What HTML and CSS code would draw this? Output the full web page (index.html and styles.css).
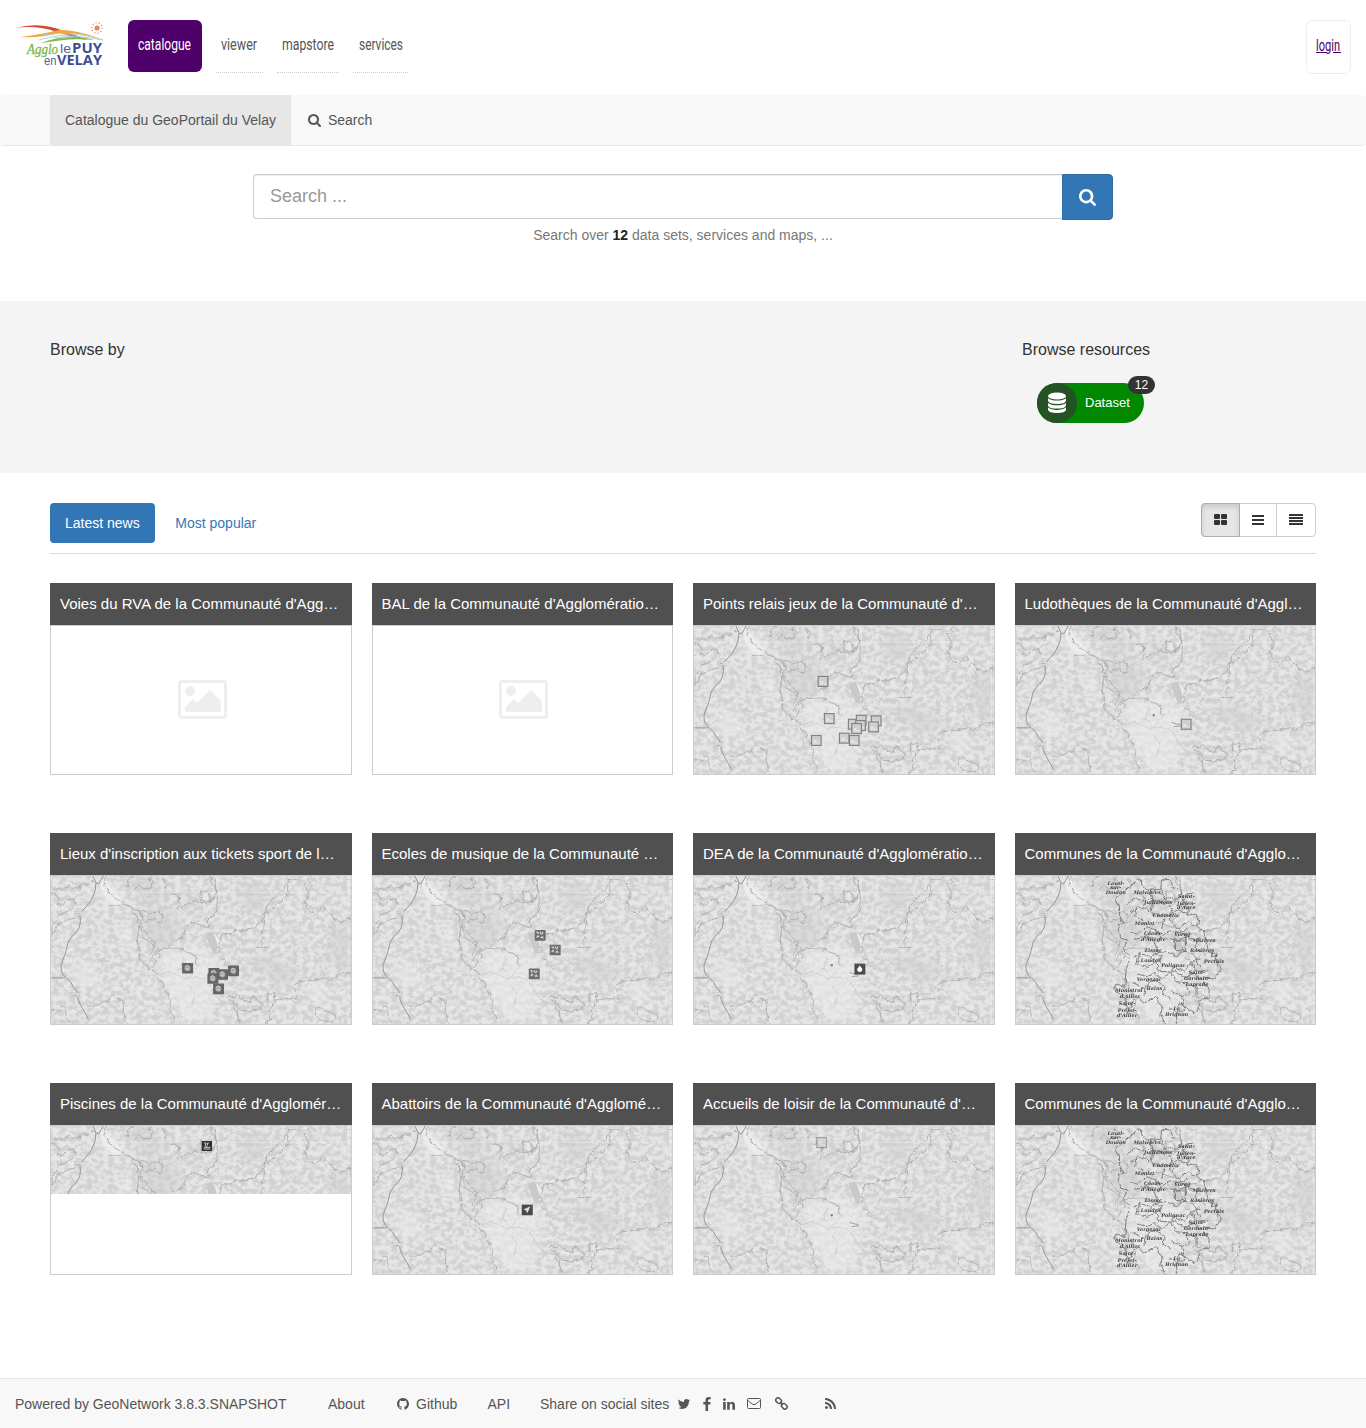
FILE: index.html
```html
<!DOCTYPE html>
<html lang="en">
<head>
<meta charset="utf-8">
<title>Catalogue du GeoPortail du Velay</title>
<link rel="stylesheet" href="styles.css">
</head>
<body>
<svg class="defs" width="0" height="0" aria-hidden="true">
  <defs>
    <filter id="relief" x="0" y="0" width="100%" height="100%" color-interpolation-filters="sRGB">
      <feTurbulence type="fractalNoise" baseFrequency="0.06 0.07" numOctaves="3" seed="11"/>
      <feColorMatrix values="2 0 0 0 -.46  2 0 0 0 -.46  2 0 0 0 -.46  0 0 0 0 1"/>
      <feComponentTransfer>
        <feFuncR type="table" tableValues=".82 .82 .83 .84 .88 .89 .9 .91"/>
        <feFuncG type="table" tableValues=".82 .82 .83 .84 .88 .89 .9 .91"/>
        <feFuncB type="table" tableValues=".82 .82 .83 .84 .88 .89 .9 .91"/>
      </feComponentTransfer>
    </filter>
    <filter id="wiggle" x="-2%" y="-2%" width="104%" height="104%" color-interpolation-filters="sRGB">
      <feTurbulence type="fractalNoise" baseFrequency="0.07" numOctaves="2" seed="4" result="n"/>
      <feDisplacementMap in="SourceGraphic" in2="n" scale="16" xChannelSelector="R" yChannelSelector="G"/>
    </filter>
    <filter id="soft" x="-30%" y="-30%" width="160%" height="160%"><feGaussianBlur stdDeviation="14"/></filter>
    <symbol id="search" viewBox="0 0 1664 1664"><path d="M1152 704q0-185-131.500-316.500t-316.500-131.500-316.500 131.500-131.500 316.500 131.500 316.500 316.500 131.500 316.500-131.500 131.500-316.500zm512 832q0 52-38 90t-90 38q-54 0-90-38l-343-342q-179 124-399 124-143 0-273.500-55.500t-225-150-150-225-55.500-273.500 55.500-273.500 150-225 225-150 273.500-55.500 273.500 55.500 225 150 150 225 55.500 273.500q0 220-124 399l343 343q37 37 37 90z"/></symbol>
    <symbol id="picture" viewBox="0 0 49 39"><rect x="1.500" y="1.500" width="46" height="36" rx="2.500" fill="none" stroke="currentColor" stroke-width="3"/><circle cx="12" cy="11" r="5"/><path d="M7 32v-5l8-8 4 4 13-13 11 11v11z"/></symbol>
    <g id="terrain">
      <rect x="27" y="153" width="900" height="446" filter="url(#relief)"/>
      <g filter="url(#soft)">
        <path fill="#cdcdcd" opacity=".5" d="M300 260h90l30 70-60 60-70-60zM230 153h90l60 60-60 40zM870 300h57v150l-60-40zM590 190l60-20 30 60-60 40zM600 400l80-10 100 50-60 40zM420 200l60 20-30 50z"/>
        <path fill="#ebebeb" opacity=".6" d="M160 160l40 10 60 70-50 10-40-40zM360 370l100-10 80 50-40 180h-80l-60-130zM220 300l60 20-20 60zM790 470l60 20 10 50-50-10z"/>
        <path fill="#ececec" opacity=".5" d="M90 400l70 20 20 80-80-30zM40 270l60-10-30 50z"/>
      </g>
      <path fill="#ececec" d="M174 160l14-4 16 30 24 22 14 28-24 4-26-20-16-30z"/>
      <path fill="#c9c9c9" d="M492 328l24-8 10 20 0 48-12-2-14-32z"/><path fill="#eee" d="M514 320l12 16 8 26-8-6z"/>
      <path stroke="#eee" stroke-width="2" d="M27 202h900M921 153v446" opacity=".7"/>
      <g filter="url(#wiggle)">
      <g fill="none" stroke="#a8a8a8" stroke-width="2.600" stroke-linejoin="round">
        <path d="M27 205l14 4 10 16-6 14 20 3 16-18 14-2 4 14-14 18-28 12-12 22-18 18v24l12-10 8-20 28-14 26-8M34 192h30l18-8 10 6 16-2 12-8 24-4 14-8M190 155l-4 24 10 18 22 20 36 22 26 14 20 18-4 30 12 20 30 32-2 20-14 20M250 190l14-12-8-12 20-12M276 192l20-10 8 10 26-4 4-16-12-8 10-10M370 196l4-16-12-20M388 208l22 2v40l18-8 16-10 16-4 20 6 30-8 14-20-4-24-14-10 8-27M478 195l2 32 30 4-4-24-28-8"/>
        <path d="M522 155l-2 30 7 28-3 50-27 24v18l-50-12-14 20-10 26-32 14-16 18-24 6-26 32M270 250l16 22 4 40-4 30 6 60 30 30 16 8 20 32 20 40 10 18-6 24 14 30M330 430l20-30 4-24-22-18-30-20M288 260l20-4 16 12 30-10 8 20-6 16-20-12-24 8-10-12z"/>
        <path d="M750 157l-14 16-10 20-24 20-26 28-8 26 14-8 24-20 34-32 0-28M668 267l-10 28-24 14-26 8-24-2-14 10-30 6-8 20-2 36 14 22 28 26M668 267l-6 60-2 34M800 160l8 20-22-4 14 24-2 24-8 10 14 24 18 10 8-8 14-18 10 16 20 18 24 16 20-8 28-4"/>
        <path d="M555 520l16-4 22-4 14 16 18 4 12-22 8 18 20 10-8 16-24 6-36-2-16-20-18-12M570 530l16 36 8 32M670 598l20-12-8-26 12-22-20-10 4-22h22l-2 26 26-12 22 4 20-4-4-20-10-12 14-14 46-8 18-6 36 4 24-10 26-10 14 8M820 554l20-6 18 16 22 6 4 12-16 10-24-2-22-16z"/>
        <path d="M27 555l14 8 24-18 10 16-4 20 14 14M135 545h30l18-14 16-2 12-20 14 14 18 4 2 40 12 32M290 300l12 26M365 370l44 0 22 8 34 22v24"/>
      </g>
      <g fill="none" stroke="#c4c4c4" stroke-width="2">
        <path d="M160 400l26 10-8 12 22 8-28 14M410 370l14 34-10 30 30 20 26-30 24-12M440 480l20 30-12 40M350 450l36-8 40 20 40-4 30 12 24 40 40 50M600 320l0 30-20 40 50 30M700 220l20 70 50 20 28-30M860 290l16 30-16 50-22 36M760 360l0 90-24 30M380 540l60 50"/>
      </g>
      </g>
      <path fill="none" stroke="#969696" stroke-width="3" stroke-linejoin="round" d="M184 153l-14 24-8-4-9-20M162 173q0 24-8 40-8 20-24 36-14 10-16 22 4 20-2 36-6 16-18 24-18 20-18 32-6 30-14 44-8 16-4 32 4 14 16 22 14 10 20 26 8 8 12 16 0 24 10 40 12 20 24 42M27 460h42"/>
      <g fill="#d8d8d8" stroke="#b4b4b4"><rect x="97" y="260" width="24" height="11"/><rect x="87" y="505" width="26" height="12"/></g>
      <g class="place"><text x="99" y="269">A 75</text><text x="90" y="514">A 75</text><text x="203" y="243" textLength="31">Brioude</text><text x="739" y="164" textLength="29">Firminy</text><text x="637" y="371" textLength="43">Yssingeaux</text><text x="904" y="164" textLength="22">Ann</text></g>
    </g>
    <g id="town"><circle cx="441" cy="422" r="3.500" fill="#777"/><path d="M495 444l14 4 12 2M502 456l20-2" stroke="#8c8c8c" stroke-width="3" stroke-dasharray="4 1" fill="none"/></g>
    <g id="m-box"><rect x="-14" y="-14" width="29" height="30" fill="#cfcfcf" stroke="#828282" stroke-width="3.500"/><path d="M-6 0v10M-1 4v6M4 6v4M9 6v4M-6 2h7" fill="none" stroke="#eee" stroke-width="3"/></g>
    <g id="m-ticket"><rect x="-15" y="-15" width="33" height="32" rx="2" fill="#666"/><circle cx="1" cy="1" r="9" fill="#9c9c9c"/><path d="M-7-3l8-5 6 7M-6 5l5-5 4 8M5 1v5" stroke="#e0e0e0" stroke-width="2.500" fill="none"/></g>
    <g id="m-music"><rect x="-15" y="-15" width="33" height="32" rx="2" fill="#6e6e6e"/><path d="M-10-8h5v5M3-10l-2 6M10-9L5-1M-9 8l4-7M3 9l6-5M-5 4h4M7 4l4 6" stroke="#ddd" stroke-width="3.500" fill="none"/></g>
    <g id="communes">
      <g fill="none" stroke="#7a7a7a" stroke-width="2.900" stroke-linejoin="round" filter="url(#wiggle)">
        <path d="M385 177l14-16 14 10 5 20 50 3 2-28 14-6 16 12 4 16 24 8 8 32 14 24 0 20 22-8 10 20-4 22 18 8 8 40 8 28 26 6-4 20 16 28-20 24-30-2-8 20 22 12-2 28-30 12 2 26-14 10-22-14-24-14-6 24-4 38-20 22-16-26-10-24 4-24-18-30-36 18-20-16-12 10-14 26-14-18 4-18-24-16-14-16 16-8 20 6 4-54 12-30-20-30 10-22-18-12-10-36 16-10-10-24 0-22-12-26z"/>
        <path d="M360 238l30-18 24 8 24-8 28 12 26-14 28 6M375 268l26-22 30 8 22 20 26-8 14 8 26-20 32 14M392 250l-2 24 20 6 16 26-24 20-28-8M440 260l4-40-8-28M470 190l8 30 24 30-8 34 28 30 28-24 26 18M426 306l30 10 10 26 30-24 28 8 22-12 10 28 34 6M388 344l40-8 20 14 12 34-22 14-34-12-18 12M460 384l30-4 22 12 28-14 8-42-34 10-30-6M404 386l-8 34 30 8 28-14 20-22M454 414l10 26 30 2 18-16 28 14 20-28 24-12M396 448l30 8 22-12 20 20 24-16 20-12M380 474l40 18 28-26 30 16-2 28 22 14M500 448l14 24 28 2 10 30-18 14M512 440l28 18 28-12 22 18M420 492l-2 22M542 474l32 14 0 22M560 412l16 28 40-2M540 378l30 14 16 36M584 340l-14 28 30 20M500 500l30 14 10 40-24 12-20-16M522 314l18 10 6 36M512 346v32h30v-32zM478 282l-8 30M530 230l20-20 14-8"/>
      </g>
      <g class="commune">
        <text x="333" y="179">Laval-</text><text x="333" y="191">sur-</text><text x="333" y="207">Doulon</text><text x="427" y="206">Malvières</text><text x="460" y="236">Jullianges</text><text x="545" y="219">Saint-</text><text x="545" y="240">Julien-</text><text x="545" y="253">d'Ance</text><text x="483" y="276">Chomelix</text><text x="420" y="300">Monlet</text><text x="446" y="332">Céaux-</text><text x="446" y="350">d'Allègre</text><text x="532" y="333">Vorey</text><text x="598" y="353">Mézères</text><text x="446" y="382">Lissac</text><text x="592" y="383">Rosières</text><text x="628" y="397">Le</text><text x="628" y="415">Pertuis</text><text x="438" y="411">Loudes</text><text x="506" y="428">Polignac</text><text x="577" y="448">Saint-</text><text x="577" y="466">Germain-</text><text x="577" y="485">Laprade</text><text x="433" y="468">Vergezac</text><text x="449" y="496">Bains</text><text x="372" y="503">Monistrol</text><text x="375" y="521">d'Allier</text><text x="367" y="543">Saint-</text><text x="367" y="564">Préjet-</text><text x="367" y="578">d'Allier</text><text x="516" y="556">Le</text><text x="516" y="575">Brignon</text>
      </g>
    </g>
  </defs>
</svg>

<header class="top">
  <svg class="logo" viewBox="0 0 90 46" role="img" aria-label="Agglo le Puy en Velay">
    <path d="M0 6q27-7 51 4 13 4 20 8-15-3-29-8Q22 3 0 6z" fill="#d24a32"/>
    <path d="M5 15q24-3 38-7 16-1 44 9-24-7-42-6-18 5-40 4z" fill="#f1a63a"/>
    <path d="M28 13q28-5 60 5-30-6-49-2M24 18q20-6 36-5" fill="none" stroke="#a9cce5" stroke-width=".9"/>
    <path d="M26 21q14-6 32-6 12 0 21 3-22-2-38 1-6 1-15 2z" fill="#86bc4e"/>
    <circle cx="82" cy="6" r="5.200" fill="none" stroke="#d66a55" stroke-width="1.100" stroke-dasharray="1 2.200"/><circle cx="82" cy="6" r="2.600" fill="#e08a68"/>
    <text class="logo-script" x="12" y="32" textLength="31" lengthAdjust="spacingAndGlyphs">Agglo</text>
    <text class="logo-light" x="45" y="31" textLength="11" lengthAdjust="spacingAndGlyphs">le</text>
    <text class="logo-bold" x="57" y="31" textLength="30" lengthAdjust="spacingAndGlyphs">PUY</text>
    <text class="logo-light" x="29" y="43" textLength="12.500" lengthAdjust="spacingAndGlyphs">en</text>
    <text class="logo-bold" x="42" y="43" textLength="45" lengthAdjust="spacingAndGlyphs">VELAY</text>
  </svg>
  <nav class="apps">
    <a class="app current"><svg width="54" height="24"><text y="17" textLength="53" lengthAdjust="spacingAndGlyphs">catalogue</text></svg></a>
    <a class="app viewer"><svg width="36" height="24"><text y="17" textLength="36" lengthAdjust="spacingAndGlyphs">viewer</text></svg></a>
    <a class="app mapstore"><svg width="52" height="24"><text y="17" textLength="52" lengthAdjust="spacingAndGlyphs">mapstore</text></svg></a>
    <a class="app services"><svg width="44" height="24"><text y="17" textLength="44" lengthAdjust="spacingAndGlyphs">services</text></svg></a>
  </nav>
  <a class="login"><svg width="25" height="24"><text y="17" textLength="24" lengthAdjust="spacingAndGlyphs">login</text><path d="M0 18.500h11M17 18.500h8" stroke="#50006a"/></svg></a>
</header>

<nav class="navbar">
  <a class="brand">Catalogue du GeoPortail du Velay</a>
  <a class="nav-link"><svg class="ico13"><use href="#search"/></svg>Search</a>
</nav>

<section class="finder">
  <div class="search-group">
    <div class="search-field">Search ...</div>
    <div class="search-button"><svg><use href="#search"/></svg></div>
  </div>
  <p>Search over <b>12</b> data sets, services and maps, ...</p>
</section>

<section class="browse">
  <h4>Browse by</h4>
  <div class="resources">
    <h4>Browse resources</h4>
    <a class="chip"><span class="disc"><svg viewBox="0 0 18 21"><g fill="#fff"><ellipse cx="9" cy="4" rx="9" ry="3.600"/><path d="M0 6.200q3 2.400 9 2.400t9-2.400v2.600q-1 3.200-9 3.200T0 8.800zM0 10.900q3 2.400 9 2.400t9-2.400v2.500q-1 3.200-9 3.200t-9-3.200zM0 15.600Q3 18 9 18t9-2.400V18q-1 3-9 3t-9-3z"/></g></svg></span><span>Dataset</span><span class="badge">12</span></a>
  </div>
</section>

<main class="results">
  <div class="toolbar">
    <div class="tabs"><a class="tab selected">Latest news</a><a class="tab">Most popular</a></div>
    <div class="views">
      <span class="view pressed"><svg width="13" height="11"><path d="M0 1q0-1 1-1h4q1 0 1 1v3q0 1-1 1H1Q0 5 0 4zM7 1q0-1 1-1h4q1 0 1 1v3q0 1-1 1H8Q7 5 7 4zM0 7q0-1 1-1h4q1 0 1 1v3q0 1-1 1H1q-1 0-1-1zM7 7q0-1 1-1h4q1 0 1 1v3q0 1-1 1H8q-1 0-1-1z"/></svg></span>
      <span class="view mid"><svg width="12" height="10"><path d="M0 0h12v2H0zM0 4h12v2H0zM0 8h12v2H0z"/></svg></span>
      <span class="view"><svg width="14" height="11"><path d="M0 0h14v2H0zM0 3h14v2H0zM0 6h14v2H0zM0 9h14v2H0z"/></svg></span>
    </div>
  </div>

  <div class="cards">
    <article class="card"><h3>Voies du RVA de la Communauté d'Agg…</h3><div class="thumb empty"><svg><use href="#picture"/></svg></div></article>
    <article class="card"><h3>BAL de la Communauté d'Agglomératio…</h3><div class="thumb empty"><svg><use href="#picture"/></svg></div></article>
    <article class="card"><h3>Points relais jeux de la Communauté d'…</h3><div class="thumb"><svg class="map" viewBox="27 153 900 446" preserveAspectRatio="none"><use href="#terrain"/><use href="#m-box" x="414" y="319"/><use href="#m-box" x="433" y="431"/><use href="#m-box" x="394" y="497"/><use href="#m-box" x="478" y="490"/><use href="#m-box" x="508" y="497"/><use href="#m-box" x="505" y="448"/><use href="#m-box" x="529" y="436"/><use href="#m-box" x="527" y="452"/><use href="#m-box" x="515" y="461"/><use href="#m-box" x="574" y="438"/><use href="#m-box" x="566" y="456"/></svg></div></article>
    <article class="card"><h3>Ludothèques de la Communauté d'Aggl…</h3><div class="thumb"><svg class="map" viewBox="27 153 900 446" preserveAspectRatio="none"><use href="#terrain"/><use href="#town"/><use href="#m-box" x="538" y="448"/></svg></div></article>

    <article class="card"><h3>Lieux d'inscription aux tickets sport de l…</h3><div class="thumb"><svg class="map" viewBox="27 153 900 446" preserveAspectRatio="none"><use href="#terrain"/><use href="#m-ticket" x="436" y="430"/><use href="#m-ticket" x="515" y="445"/><use href="#m-ticket" x="541" y="449"/><use href="#m-ticket" x="512" y="461"/><use href="#m-ticket" x="574" y="438"/><use href="#m-ticket" x="529" y="492"/></svg></div></article>
    <article class="card"><h3>Ecoles de musique de la Communauté …</h3><div class="thumb"><svg class="map" viewBox="27 153 900 446" preserveAspectRatio="none"><use href="#terrain"/><use href="#m-music" x="528" y="331"/><use href="#m-music" x="573" y="375"/><use href="#m-music" x="510" y="447"/></svg></div></article>
    <article class="card"><h3>DEA de la Communauté d'Agglomératio…</h3><div class="thumb"><svg class="map" viewBox="27 153 900 446" preserveAspectRatio="none"><use href="#terrain"/><use href="#town"/><rect x="509" y="417" width="33" height="33" fill="#4b4b4b"/><path d="M525 422q3 6 7 10 2 4-1 8-6 5-12 0-3-4-1-8 5-4 7-10z" fill="#fff"/></svg></div></article>
    <article class="card"><h3>Communes de la Communauté d'Agglo…</h3><div class="thumb"><svg class="map" viewBox="33 153 900 446" preserveAspectRatio="none"><use href="#terrain" x="6"/><use href="#communes"/></svg></div></article>

    <article class="card"><h3>Piscines de la Communauté d'Agglomér…</h3><div class="thumb"><svg class="map half" viewBox="27 153 900 204" preserveAspectRatio="none"><use href="#terrain"/><rect x="480" y="198" width="31" height="30" fill="#303030"/><path d="M487 204l6 0-3 8 6 3M502 204h-5v8M486 217h20M486 222h20" stroke="#ccc" stroke-width="3" fill="none"/></svg></div></article>
    <article class="card"><h3>Abattoirs de la Communauté d'Agglomé…</h3><div class="thumb"><svg class="map" viewBox="27 153 900 446" preserveAspectRatio="none"><use href="#terrain"/><rect x="474" y="390" width="33" height="32" fill="#494949"/><path d="M479 405l21-10-9 21-4-8z" fill="#ddd"/></svg></div></article>
    <article class="card"><h3>Accueils de loisir de la Communauté d'…</h3><div class="thumb"><svg class="map" viewBox="27 153 900 446" preserveAspectRatio="none"><use href="#terrain"/><use href="#town"/><use href="#m-box" x="410" y="202" opacity=".7"/></svg></div></article>
    <article class="card"><h3>Communes de la Communauté d'Agglo…</h3><div class="thumb"><svg class="map" viewBox="33 153 900 446" preserveAspectRatio="none"><use href="#terrain" x="6"/><use href="#communes"/></svg></div></article>
  </div>
</main>

<footer>
  <span class="powered">Powered by GeoNetwork 3.8.3.SNAPSHOT</span>
  <a class="about">About</a>
  <a class="github"><svg class="fa" viewBox="128 128 1536 1536"><path d="M896 128q209 0 385.500 103t279.500 279.500 103 385.500q0 251-146.500 451.500t-378.500 277.500q-27 5-40-7t-13-30q0-3 .5-76.500t.5-134.500q0-97-52-142 57-6 102.500-18t94-39 81-66.500 53-105 20.500-150.500q0-119-79-206 37-91-8-204-28-9-81 11t-92 44l-38 24q-93-26-192-26t-192 26q-16-11-42.500-27t-83.500-38.500-85-13.500q-45 113-8 204-79 87-79 206 0 85 20.500 150t52.500 105 80.500 67 94 39 102.500 18q-39 36-49 103-21 10-45 15t-57 5-65.500-21.500-55.500-62.500q-19-32-48.500-52t-49.500-24l-20-3q-21 0-29 4.500t-5 11.500 9 14 13 12l7 5q22 10 43.500 38t31.500 51l10 23q13 38 44 61.500t67 30 69.500 7 55.500-3.500l23-4q0 38 .5 88.500t.5 54.500q0 18-13 30t-40 7q-232-77-378.500-277.500t-146.500-451.500q0-209 103-385.500t279.500-279.500 385.500-103z"/></svg>Github</a>
  <a class="api">API</a>
  <span class="share">Share on social sites</span>
  <div class="social">
    <svg class="tw" viewBox="0 0 1792 1792"><path d="M1684 408q-67 98-162 167 1 14 1 42 0 130-38 259.500t-115.500 248.500-184.500 210.500-258 146-323 54.500q-271 0-496-145 35 4 78 4 225 0 401-138-105-2-188-64.500t-114-159.500q33 5 61 5 43 0 85-11-112-23-185.500-111.500t-73.500-205.500v-4q68 38 146 41-66-44-105-115t-39-154q0-88 44-163 121 149 294.500 238.500t371.500 99.500q-8-38-8-74 0-134 94.500-228.500t228.500-94.500q140 0 236 102 109-21 205-78-37 115-142 178 93-10 186-50z"/></svg>
    <svg class="fb" viewBox="479 0 864 1664"><path d="M1343 12v264h-157q-86 0-116 36t-30 108v189h293l-39 296h-254v759h-306v-759h-255v-296h255v-218q0-186 104-288.500t277-102.500q147 0 228 12z"/></svg>
    <svg class="in" viewBox="128 148 1536 1468"><path d="M477 625v991h-330v-991h330zm21-306q1 73-50.500 122t-135.500 49h-2q-82 0-132-49t-50-122q0-74 51.500-122.500t134.500-48.500 133 48.500 51 122.500zm1166 729v568h-329v-530q0-105-40.500-164.500t-126.500-59.500q-63 0-105.500 34.500t-63.500 85.500q-11 30-11 81v553h-329q2-399 2-647t-1-296l-1-48h329v144h-2q20-32 41-56t56.500-52 87-43.500 114.500-15.500q171 0 275 113.500t104 332.500z"/></svg>
    <svg class="mail" viewBox="0 0 14 11"><path d="M1.500.5h11q1 0 1 1v8q0 1-1 1h-11q-1 0-1-1v-8q0-1 1-1zM.5 2q2 2 5 4.200 1.500 1 3 0Q11.500 4 13.500 2" fill="none" stroke="currentColor"/></svg>
    <svg class="chain" viewBox="0 0 13 13"><g fill="none" stroke="currentColor" stroke-width="1.500"><rect x="-3" y="-2.200" width="6" height="4.400" rx="1.900" transform="translate(3.600 3.600) rotate(45)"/><rect x="-3" y="-2.200" width="6" height="4.400" rx="1.900" transform="translate(9.300 9.300) rotate(45)"/><path d="M5 5l3 3"/></g></svg>
    <svg class="rss" viewBox="192 128 1408 1408"><path d="M576 1344q0 80-56 136t-136 56-136-56-56-136 56-136 136-56 136 56 56 136zm512 123q2 28-17 48-18 21-47 21h-135q-25 0-43-16.500t-20-41.500q-22-229-184.500-391.500t-391.500-184.500q-25-2-41.500-20t-16.500-43v-135q0-29 21-47 17-17 43-17h5q160 13 306 80.500t259 181.500q114 113 181.500 259t80.500 306zm512 2q2 27-18 47-18 20-46 20h-143q-26 0-44.500-17.500t-19.500-42.500q-12-215-101-408.500t-231.500-336-336-231.500-408.500-102q-25-1-42.500-19.500t-17.500-43.500v-143q0-28 20-46 18-18 44-18h3q262 13 501.500 120t425.500 294q187 186 294 425.500t120 501.500z"/></svg>
  </div>
</footer>
</body>
</html>
```
FILE: styles.css
```css
* { box-sizing: border-box; }
body { margin: 0; min-height: 1428px; display: flex; flex-direction: column; font: 14px/20px "Liberation Sans", Arial, sans-serif; color: #333; background: #fff; }
svg { display: block; fill: currentColor; flex: none; }
.defs { position: absolute; }
h3, h4, p { margin: 0; font-weight: 400; }

.top { height: 95px; display: flex; padding: 20px 15px 0; align-items: flex-start; }
.top svg { overflow: visible; }
.logo { width: 90px; height: 46px; margin-top: 2px; }
.logo-script { font: italic 15px "Liberation Serif", serif; fill: #76b83f; stroke: #76b83f; stroke-width: .3px; }
.logo-light { font: 13px "Liberation Sans", sans-serif; fill: #52619b; }
.logo-bold { font: 700 14.5px "Open Sans", sans-serif; fill: #3d4f92; }
.apps { display: flex; margin-left: 23px; }
.app { height: 53px; padding: 13px 5px 0; margin-right: 14px; border-bottom: 1px dotted #ccc; color: #555; font: 17px Roboto, sans-serif; }
.app.current { width: 74px; height: 52px; padding-left: 10px; background: #50006a; color: #fff; border: 0; border-radius: 6px; }
.viewer { width: 47px; }
.mapstore { width: 62px; }
.services { width: 55px; padding-left: 6px; }
.login { width: 45px; height: 54px; margin-left: auto; padding: 13px 9px 0; border: 1px dotted #ddd; border-radius: 6px; color: #50006a; font: 16px Roboto, sans-serif; }

.navbar { height: 51px; display: flex; padding-left: 50px; background: #f8f8f8; border-bottom: 1px solid #e7e7e7; border-radius: 4px; color: #555; }
.brand { padding: 15px; background: #e7e7e7; }
.nav-link { display: flex; align-items: center; padding-left: 17px; }
.ico13 { width: 13px; height: 13px; margin-right: 7px; }

.finder { height: 155px; padding-top: 28px; text-align: center; color: #777; }
.finder b { color: #222; }
.finder p { margin-top: 5px; }
.search-group { width: 860px; margin: 0 auto; display: flex; height: 46px; }
.search-field { flex: 1; height: 45px; padding: 9px 16px; border: 1px solid #ccc; border-right: 0; border-radius: 4px 0 0 4px; box-shadow: inset 0 1px 1px rgba(0,0,0,.075); font-size: 18px; line-height: 24px; text-align: left; color: #999; }
.search-button { width: 51px; border: 1px solid #2e6da4; border-radius: 0 4px 4px 0; background: #3276b5; color: #fff; display: grid; place-items: center; }
.search-button svg { width: 17px; height: 17px; }

.browse { height: 172px; display: flex; justify-content: space-between; padding: 38px 50px 0; background: #f4f4f4; }
.browse h4 { font-size: 16px; line-height: 22px; }
.resources { width: 294px; }
.chip { position: relative; display: flex; align-items: center; width: 107px; height: 40px; margin: 22px 0 0 15px; border-radius: 20px; background: #080; color: #fff; font-size: 13px; }
.disc { width: 40px; height: 40px; margin-right: 8px; border-radius: 50%; background: #255225; display: grid; place-items: center; }
.disc svg { width: 18px; height: 21px; margin-top: -2px; }
.badge { position: absolute; left: 91px; top: -7px; width: 27px; height: 18px; border-radius: 9px; background: #333; font-size: 12px; line-height: 18px; text-align: center; }

.results { padding: 30px 50px 0; }
.toolbar { height: 51px; display: flex; justify-content: space-between; border-bottom: 1px solid #ddd; }
.tabs { display: flex; gap: 5.6px; color: #337ab7; }
.tab { height: 40px; padding: 10px 15px; border-radius: 4px; }
.tab.selected { background: #3276b5; color: #fff; }
.views { display: flex; width: 115px; height: 34px; border: 1px solid #ccc; border-radius: 4px; }
.view { flex: 1; display: grid; place-items: center; color: #333; }
.view.mid { flex: none; width: 37px; border-right: 1px solid #ccc; }
.view.pressed { width: 39px; flex: none; margin: -1px 0 -1px -1px; padding-bottom: 1px; border: 1px solid #adadad; border-radius: 4px 0 0 4px; background: #e6e6e6; box-shadow: inset 0 3px 5px rgba(0,0,0,.125); }
.view:last-child { padding-bottom: 1px; }

.cards { display: grid; grid-template-columns: repeat(4, 1fr); column-gap: 20px; row-gap: 58px; margin-top: 29px; }
.card { min-width: 0; height: 192px; }
.card h3 { height: 42px; padding: 0 10px; background: #505050; color: #fff; font-size: 15px; line-height: 42px; white-space: nowrap; overflow: hidden; }
.thumb { height: 150px; border: 1px solid #ccc; overflow: hidden; }
.thumb.empty { padding: 54px 0 0 126.5px; color: #eee; }
.empty svg { width: 49px; height: 39px; }
.map { width: 100%; height: 148px; }
.map.half { height: 68px; }
.place { font: 7px "Liberation Sans", sans-serif; fill: #777; }
.commune { font: italic 700 15px "DejaVu Serif", serif; fill: #444; text-anchor: middle; }

footer { height: 50px; margin-top: auto; padding-left: 15px; display: flex; align-items: center; background: #f8f8f8; border-top: 1px solid #e7e7e7; color: #555; }
.powered { width: 313px; }
.about { width: 69px; }
.github { width: 90.5px; display: flex; align-items: center; }
.fa { width: 12px; height: 12px; margin-right: 7px; }
.api { width: 52.5px; }
.share { width: 137px; white-space: nowrap; }
.social { display: flex; align-items: center; }
.tw { width: 14px; height: 14px; }
.fb { width: 8px; height: 14px; margin-left: 12px; }
.in { width: 12px; height: 12px; margin-left: 12px; }
.mail { width: 14px; height: 11px; margin-left: 12px; }
.chain { width: 13px; height: 13px; margin-left: 14px; }
.rss { width: 11px; height: 11px; margin-left: 37px; }
```
